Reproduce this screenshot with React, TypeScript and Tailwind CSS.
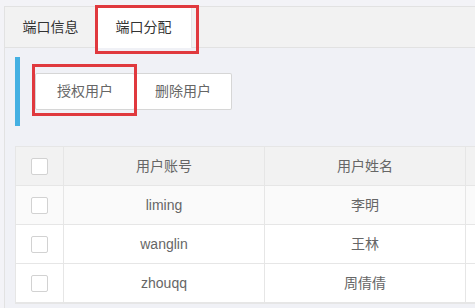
import React from "react";

const rows = [
  { account: "liming", name: "李明", bg: "bg-[#fafafa]" },
  { account: "wanglin", name: "王林", bg: "bg-white" },
  { account: "zhouqq", name: "周倩倩", bg: "bg-white" },
];

function Check() {
  return <div className="w-[17px] h-[17px] border border-[#d2d2d2] bg-white rounded-[2px]" />;
}

export default function App() {
  return (
    <div
      className="relative w-[475px] h-[308px] overflow-hidden bg-[#f3f3f7] pl-[4px] pt-[6px] text-[14px]"
      style={{ fontFamily: '"Liberation Sans", "Noto Sans CJK SC", sans-serif' }}
    >
      <div className="h-full border-l border-t border-[#e2e2e2] bg-[#f0f1f6]">
        <div className="flex h-[41px] bg-[#f2f2f2] border-b border-[#e2e2e2]">
          <div className="w-[91px] flex items-center justify-center text-[#333]">端口信息</div>
          <div className="w-[96px] flex items-center justify-center text-[#333] bg-white border-r border-[#e6e6e6] h-[41px]">
            端口分配
          </div>
        </div>
        <div className="pl-[10px] pt-[9px]">
          <div className="flex h-[69px] items-center">
            <div className="w-[5px] h-full bg-[#45b0e2]" />
            <div className="flex ml-[15px]">
              <button className="w-[100px] h-[37px] border border-[#d6d6d6] bg-white rounded-[2px] text-[#666]">
                授权用户
              </button>
              <button className="w-[97px] h-[37px] border border-[#d6d6d6] border-l-0 bg-white rounded-[2px] text-[#666]">
                删除用户
              </button>
            </div>
          </div>
          <div className="mt-[20px] w-[660px] border border-[#e6e6e6] text-[#666]">
            <div className="flex h-[39px] bg-[#f2f2f2] border-b border-[#e6e6e6]">
              <div className="w-[48px] flex items-center justify-center border-r border-[#e6e6e6]">
                <Check />
              </div>
              <div className="w-[201px] flex items-center justify-center border-r border-[#e6e6e6]">用户账号</div>
              <div className="w-[201px] flex items-center justify-center border-r border-[#e6e6e6]">用户姓名</div>
              <div className="flex-1" />
            </div>
            {rows.map((r) => (
              <div key={r.account} className={`flex h-[39px] border-b border-[#e6e6e6] ${r.bg}`}>
                <div className="w-[48px] flex items-center justify-center border-r border-[#e6e6e6]">
                  <Check />
                </div>
                <div className="w-[201px] flex items-center justify-center border-r border-[#e6e6e6]">{r.account}</div>
                <div className="w-[201px] flex items-center justify-center border-r border-[#e6e6e6]">{r.name}</div>
                <div className="flex-1" />
              </div>
            ))}
          </div>
        </div>
      </div>
      <div className="absolute left-[95px] top-[5px] w-[104px] h-[49px] border-[3px] border-[#e0393e]" />
      <div className="absolute left-[32px] top-[64px] w-[105px] h-[52px] border-[3px] border-[#e0393e]" />
    </div>
  );
}
